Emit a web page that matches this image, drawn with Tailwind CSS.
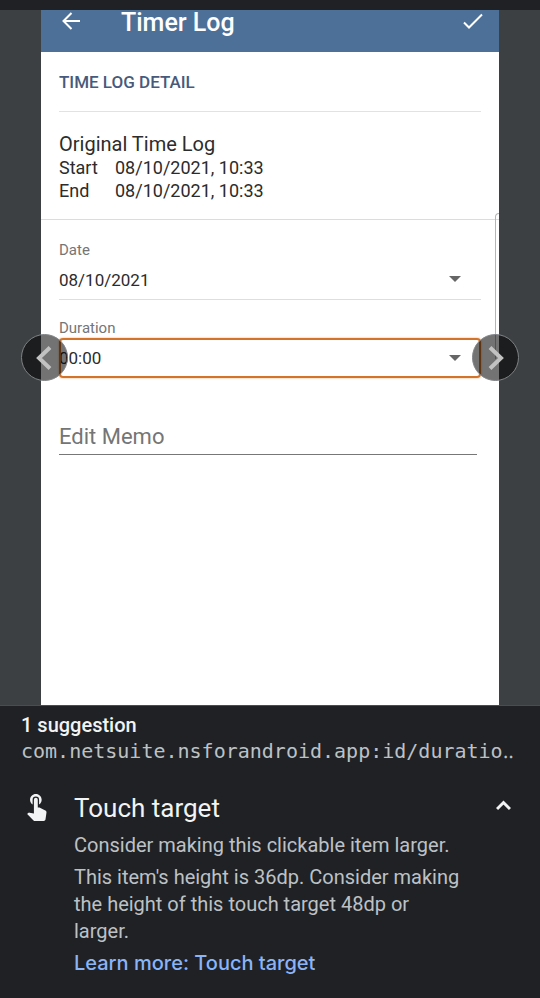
<!DOCTYPE html>
<html lang="en">
<head>
<meta charset="utf-8">
<meta name="viewport" content="width=device-width, initial-scale=1">
<title>Timer Log</title>
<script src="https://cdn.jsdelivr.net/npm/@tailwindcss/browser@4"></script>
</head>
<body class="flex min-h-screen flex-col bg-[#202124] font-['Roboto',sans-serif]">
  <main class="relative mt-[10px] flex flex-1 flex-col bg-[#3c4043] pr-[41px] pl-[41px]">
    <div class="relative flex flex-1 flex-col bg-white text-[#2c2c2c]">
      <header class="flex h-[42px] items-start bg-[#4d7099] pr-[14px] pl-4 text-white">
        <button type="button" aria-label="Back" class="flex h-[22px] w-7 items-center justify-center">
          <svg class="size-5" viewBox="0 0 20 20" fill="none" stroke="currentColor" stroke-width="2"><path d="M19 10H3M10.500 2 2.500 10l8 8"/></svg>
        </button>
        <h1 class="ml-9 flex-1 text-[25px] leading-[26px] font-medium">Timer Log</h1>
        <button type="button" aria-label="Save" class="flex h-[22px] w-6 items-center justify-center">
          <svg class="h-5 w-6" viewBox="0 0 24 20" fill="none" stroke="currentColor" stroke-width="2"><path d="M3 11.500 8 16.500 21 3.500"/></svg>
        </button>
      </header>
      <section class="px-[18px] pb-[17px]">
        <h2 class="border-b border-[#e2e2e2] pt-5 pb-[19px] text-[17px] leading-5 font-medium text-[#475a7c]">TIME LOG DETAIL</h2>
        <h3 class="pt-5 text-xl leading-6">Original Time Log</h3>
        <dl class="grid grid-cols-[56px_1fr] text-[18px] leading-[23px]">
          <dt>Start</dt><dd>08/10/2021, 10:33</dd>
          <dt>End</dt><dd>08/10/2021, 10:33</dd>
        </dl>
      </section>
      <form class="border-t border-[#dcdcdc] px-[18px] pt-5">
        <label for="date" class="block text-[15px] leading-5 text-[#757575]">Date</label>
        <div class="relative border-b border-[#dedede]">
          <select id="date" class="block h-[39px] w-full appearance-none bg-transparent text-[17px] leading-5 outline-none"><option>08/10/2021</option></select>
          <svg class="pointer-events-none absolute top-4 right-5 h-[6px] w-3" viewBox="0 0 12 6" fill="#666"><path d="M0 0h12L6 6z"/></svg>
        </div>
        <label for="duration" class="mt-[18px] block text-[15px] leading-5 text-[#757575]">Duration</label>
        <div class="relative rounded shadow-[0_0_2px_#e9a060] outline-2 -outline-offset-2 outline-[#d3742a]">
          <select id="duration" class="block h-10 w-full appearance-none bg-transparent text-[17px] leading-5 outline-none"><option>00:00</option></select>
          <svg class="pointer-events-none absolute top-[17px] right-5 h-[6px] w-3" viewBox="0 0 12 6" fill="#666"><path d="M0 0h12L6 6z"/></svg>
        </div>
        <input type="text" aria-label="Edit Memo" placeholder="Edit Memo" class="mt-10 block h-[37px] w-[calc(100%-4px)] border-b border-[#777] bg-transparent text-[22px] outline-none placeholder:text-[#757575]">
      </form>
      <div class="absolute top-[203px] right-0 h-[146px] w-1 rounded-tl-md border-t border-l border-[#b5b5b5]"></div>
    </div>
    <button type="button" aria-label="Previous" class="absolute top-[324px] left-[21px] flex size-[47px] items-center justify-center rounded-full border border-[#808285] bg-black/55 text-[#c2c2c2]">
      <svg class="size-6" viewBox="0 0 24 24" fill="none" stroke="currentColor" stroke-width="4"><path d="M17 1.500 6 12l11 10.500"/></svg>
    </button>
    <button type="button" aria-label="Next" class="absolute top-[324px] right-[21px] flex size-[47px] items-center justify-center rounded-full border border-[#808285] bg-black/55 text-[#c2c2c2]">
      <svg class="size-6" viewBox="0 0 24 24" fill="none" stroke="currentColor" stroke-width="4"><path d="M6 1.500 17 12 6 22.500"/></svg>
    </button>
  </main>
  <section class="border-t border-[#4a4d50] pr-[22px] pb-[21px] pl-[21px] text-[#bdc1c6]">
    <h2 class="pt-[7px] text-xl leading-6 font-medium text-[#f1f3f4]">1 suggestion</h2>
    <p class="overflow-hidden font-['DejaVu_Sans_Mono',monospace] text-[20px] leading-7 whitespace-nowrap">com.netsuite.nsforandroid.app:id/duratio‥</p>
    <div class="mt-5 flex">
      <svg class="mt-[5px] mr-[22px] size-[31px] shrink-0" viewBox="0 0 24 24" fill="#f1f3f4"><path d="M9 11.240V7.500a2.500 2.500 0 0 1 5 0v3.740c1.210-.81 2-2.180 2-3.740C16 5.010 13.990 3 11.500 3S7 5.010 7 7.500c0 1.560.79 2.930 2 3.740zm9.840 4.630-4.540-2.260c-.17-.07-.35-.11-.54-.11H13v-6a1.500 1.500 0 0 0-3 0v10.740l-3.430-.72a1.130 1.130 0 0 0-1.030.3l-.79.800 4.940 4.940c.27.270.65.440 1.060.440h6.790c.75 0 1.330-.55 1.440-1.280l.75-5.270c.1-.68-.28-1.310-.89-1.580z"/></svg>
      <div class="flex-1">
        <button type="button" aria-expanded="true" class="flex w-full items-center justify-between pr-[7px] text-left text-[#f1f3f4]">
          <span class="text-[26px] leading-[46px]">Touch target</span>
          <svg class="mb-1 h-3 w-[15px]" viewBox="0 0 15 12" fill="none" stroke="currentColor" stroke-width="3"><path d="M1 9l6.500-6.500L14 9"/></svg>
        </button>
        <p class="text-xl leading-7">Consider making this clickable item larger.</p>
        <p class="mt-[5px] max-w-[392px] text-xl leading-[27px]">This item's height is 36dp. Consider making the height of this touch target 48dp or larger.</p>
        <a href="#" class="mt-1 block font-['Inter',sans-serif] text-xl leading-7 font-medium text-[#8ab4f8]">Learn more: Touch target</a>
      </div>
    </div>
  </section>
</body>
</html>
